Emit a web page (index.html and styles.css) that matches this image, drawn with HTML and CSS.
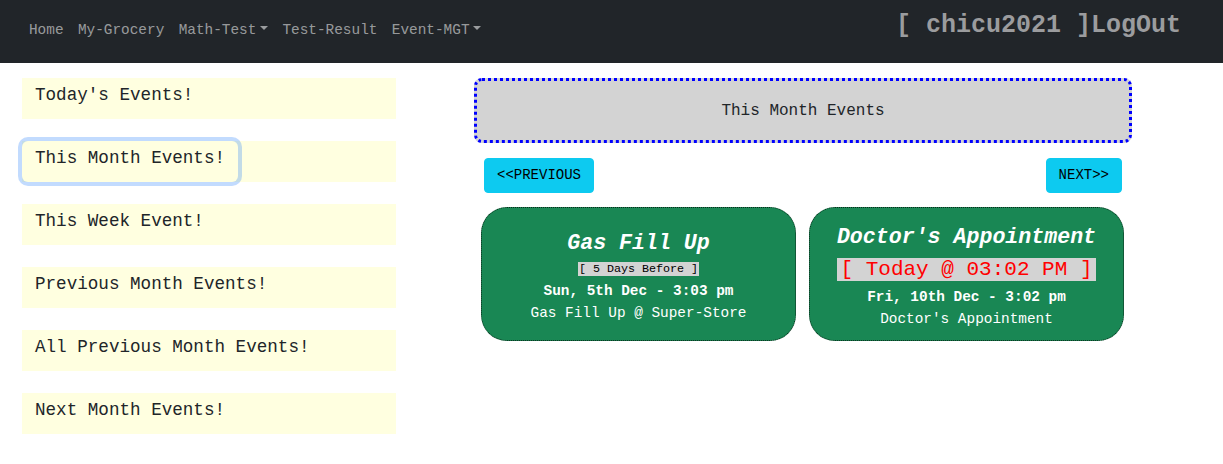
FILE: index.html
```html
<!DOCTYPE html>
<html lang="en">
<head>
<meta charset="utf-8">
<title>Events</title>
<link rel="stylesheet" href="styles.css">
</head>
<body>
<nav class="navbar">
  <ul class="nav-links">
    <li><a class="nav-link" href="#">Home</a></li>
    <li><a class="nav-link" href="#">My-Grocery</a></li>
    <li><a class="nav-link dropdown" href="#">Math-Test</a></li>
    <li><a class="nav-link" href="#">Test-Result</a></li>
    <li><a class="nav-link dropdown" href="#">Event-MGT</a></li>
  </ul>
  <div class="user">[ chicu2021 ]LogOut</div>
</nav>

<main class="page">
  <aside class="sidebar">
    <div class="side-item"><button class="side-btn">Today's Events!</button></div>
    <div class="side-item"><button class="side-btn focused">This Month Events!</button></div>
    <div class="side-item"><button class="side-btn">This Week Event!</button></div>
    <div class="side-item"><button class="side-btn">Previous Month Events!</button></div>
    <div class="side-item"><button class="side-btn">All Previous Month Events!</button></div>
    <div class="side-item"><button class="side-btn">Next Month Events!</button></div>
  </aside>

  <section class="content">
    <div class="heading-box">This Month Events</div>
    <div class="pager">
      <button class="pager-btn">&lt;&lt;PREVIOUS</button>
      <button class="pager-btn">NEXT&gt;&gt;</button>
    </div>
    <div class="cards">
      <div class="card">
        <div class="card-title">Gas Fill Up</div>
        <div class="when-line"><span class="when">[ 5 Days Before ]</span></div>
        <div class="card-date">Sun, 5th Dec - 3:03 pm</div>
        <div class="card-desc">Gas Fill Up @ Super-Store</div>
      </div>
      <div class="card">
        <div class="card-title">Doctor's Appointment</div>
        <div class="today-line"><span class="today">[ Today @ 03:02 PM ]</span></div>
        <div class="card-date">Fri, 10th Dec - 3:02 pm</div>
        <div class="card-desc">Doctor's Appointment</div>
      </div>
    </div>
  </section>
</main>
</body>
</html>
```

FILE: styles.css
```css
* { box-sizing: border-box; }

body {
  margin: 0;
  font-family: "Courier New", "Nimbus Mono PS", "Nimbus Mono L", FreeMono, Courier, "Liberation Mono", monospace;
  color: #212529;
  background: #fff;
}

button {
  font-family: inherit;
}

.navbar {
  display: flex;
  justify-content: space-between;
  align-items: flex-start;
  height: 63px;
  padding: 0 42px 0 21.8px;
  background: #212529;
}

.nav-links {
  display: flex;
  list-style: none;
  margin: 20px 0 0;
  padding: 0;
}

.nav-link {
  display: block;
  padding: 0 7.2px;
  font-size: 14.4px;
  line-height: 21.6px;
  color: rgba(255, 255, 255, 0.55);
  text-decoration: none;
}

.dropdown::after {
  content: "";
  display: inline-block;
  margin-left: 0.255em;
  vertical-align: 0.255em;
  border-top: 0.3em solid;
  border-right: 0.3em solid transparent;
  border-left: 0.3em solid transparent;
}

.user {
  margin-top: 7px;
  font-size: 25px;
  font-weight: bold;
  line-height: 37.5px;
  color: #9b9c9e;
}

.page {
  display: grid;
  grid-template-columns: 374px 658px;
  column-gap: 78px;
  padding: 15px 0 0 22px;
}

.sidebar {
  display: flex;
  flex-direction: column;
  gap: 22px;
}

.side-item {
  background: #ffffe0;
  height: 41px;
}

.side-btn {
  font-size: 17.6px;
  line-height: 26.4px;
  padding: 3px 12px 9px;
  height: 41px;
  border: 1px solid transparent;
  border-radius: 6px;
  background: transparent;
  color: #212529;
  cursor: pointer;
}

.side-btn.focused {
  box-shadow: 0 0 0 4px rgba(13, 110, 253, 0.25);
}

.heading-box {
  height: 65px;
  display: flex;
  align-items: center;
  justify-content: center;
  background: #d3d3d3;
  border: 3px dotted #0000ff;
  border-radius: 8px;
  font-size: 16px;
  color: #212529;
}

.pager {
  display: flex;
  justify-content: space-between;
  margin: 15px 10px 0;
}

.pager-btn {
  font-size: 14px;
  line-height: 21px;
  padding: 6px 12px;
  border: 1px solid #0dcaf0;
  border-radius: 4px;
  background: #0dcaf0;
  color: #000;
}

.cards {
  display: flex;
  gap: 13px;
  margin-top: 14px;
  padding: 0 8px 0 7px;
}

.card {
  flex: 1;
  height: 134px;
  display: flex;
  flex-direction: column;
  justify-content: center;
  text-align: center;
  background: #198754;
  border: 1px dotted #0b2b1b;
  border-radius: 26px;
  color: #fff;
}

.card-title {
  font-size: 21.6px;
  font-weight: bold;
  font-style: italic;
  line-height: 30px;
  margin-top: 3px;
}

.when-line {
  margin: 3px 0 4px;
  line-height: 14px;
}

.when {
  background: #d3d3d3;
  color: #000;
  font-size: 11.7px;
  padding: 0 1px;
}

.today-line {
  margin-top: 3px;
  line-height: 29px;
}

.today {
  background: #d3d3d3;
  color: #ff0000;
  font-size: 21px;
  padding: 0 3px;
}

.card-date {
  font-size: 14.4px;
  font-weight: bold;
  line-height: 22px;
}

.card-desc {
  font-size: 14.4px;
  line-height: 22px;
}
```
